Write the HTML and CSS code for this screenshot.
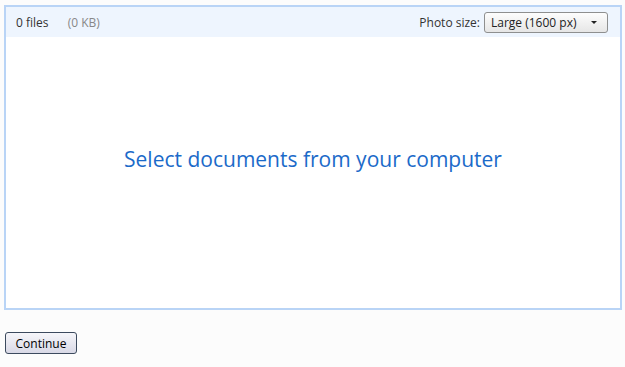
FILE: index.html
```html
<!DOCTYPE html>
<html lang="en">
<head>
  <meta charset="UTF-8">
  <title>Upload Photos</title>
  <link rel="stylesheet" href="styles.css">
</head>
<body>
  <div class="uploader">
    <div class="toolbar">
      <div class="counts">
        <span class="files">0 files</span>
        <span class="size">(0 KB)</span>
      </div>
      <label class="photo-size">
        Photo size:
        <span class="select">Large (1600 px)<span class="arrow"></span></span>
      </label>
    </div>
    <div class="drop-area">
      <a class="pick">Select documents from your computer</a>
    </div>
  </div>

  <button type="button" class="continue">Continue</button>
</body>
</html>
```

FILE: styles.css
```css
body {
  font-family: "Open Sans", "Noto Sans", sans-serif;
  font-size: 12px;
  color: #333;
  background: #fcfcfc;
  margin: 0;
  padding: 5px 3px 0 4px;
}
.uploader {
  border: 2px solid #b9d4f6;
  background: #fff;
  height: 301px;
  display: flex;
  flex-direction: column;
}
.toolbar {
  background: #eef5fe;
  height: 30px;
  display: flex;
  align-items: center;
  justify-content: space-between;
  padding: 0 12px 0 10px;
}
.counts .size {
  color: #888;
  margin-left: 16px;
}
.photo-size {
  display: flex;
  align-items: center;
  gap: 4px;
}
.select {
  position: relative;
  box-sizing: border-box;
  width: 124px;
  height: 21px;
  line-height: 19px;
  padding-left: 6px;
  border: 1px solid #8e8f8f;
  border-radius: 3px;
  background: linear-gradient(#fdfdfd, #e6e6e6);
  color: #222;
}
.arrow {
  position: absolute;
  right: 10px;
  top: 8px;
  border-left: 3px solid transparent;
  border-right: 3px solid transparent;
  border-top: 3px solid #222;
}
.drop-area {
  flex: 1;
  display: flex;
  align-items: center;
  justify-content: center;
  padding-bottom: 28px;
}
.pick {
  color: #1b6ac9;
  font-size: 21px;
  cursor: pointer;
}
.continue {
  margin-top: 22px;
  margin-left: 1px;
  width: 72px;
  height: 22px;
  font-family: "Open Sans", "Noto Sans", sans-serif;
  font-size: 12px;
  color: #000;
  border: 1px solid #3c4a5e;
  border-radius: 3px;
  background: linear-gradient(#f6f6fa, #d9d9e6);
  padding: 0;
}
```
